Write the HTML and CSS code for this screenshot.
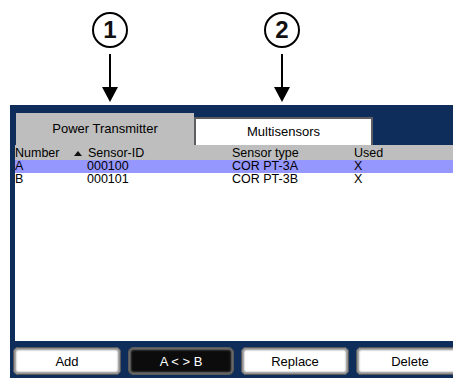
FILE: index.html
```html
<!DOCTYPE html>
<html lang="en">
<head>
    <meta charset="UTF-8">
    <meta name="viewport" content="width=device-width, initial-scale=1.0">
    <title>Sensor List</title>
    <link rel="stylesheet" href="styles.css">
</head>
<body>

    <div class="callouts">
        <div class="callout first">
            <div class="num">1</div>
            <div class="stem"></div>
            <div class="head"></div>
        </div>
        <div class="callout second">
            <div class="num">2</div>
            <div class="stem"></div>
            <div class="head"></div>
        </div>
    </div>

    <div class="screen">
        <div class="tabs">
            <div class="tab active">Power Transmitter</div>
            <div class="tab">Multisensors</div>
        </div>

        <div class="list">
            <div class="row header">
                <div>Number</div>
                <div class="sorted"><span class="arrow"></span>Sensor-ID</div>
                <div>Sensor type</div>
                <div>Used</div>
            </div>
            <div class="row selected">
                <div>A</div>
                <div class="id">000100</div>
                <div>COR PT-3A</div>
                <div>X</div>
            </div>
            <div class="row">
                <div>B</div>
                <div class="id">000101</div>
                <div>COR PT-3B</div>
                <div>X</div>
            </div>
        </div>

        <div class="buttons">
            <button>Add</button>
            <button class="dark">A &lt; &gt; B</button>
            <button>Replace</button>
            <button>Delete</button>
        </div>
    </div>

</body>
</html>
```

FILE: styles.css
```css
body {
    margin: 0;
    background: #ffffff;
    font-family: "Liberation Sans", Arial, sans-serif;
    overflow: hidden;
    width: 453px;
    height: 380px;
}

/* callout markers above the screen */
.callouts {
    display: flex;
    height: 105px;
}
.callout {
    width: 36px;
    display: flex;
    flex-direction: column;
    align-items: center;
    padding-top: 12px;
    box-sizing: border-box;
}
.callout.first {
    margin-left: 92px;
}
.callout.second {
    margin-left: 136px;
}
.num {
    width: 32px;
    height: 32px;
    border: 2px solid #000;
    border-radius: 50%;
    font-size: 24px;
    font-weight: bold;
    line-height: 32px;
    text-align: center;
    color: #111;
}
.stem {
    width: 2px;
    height: 33px;
    margin-top: 6px;
    background: #000;
}
.head {
    width: 0;
    height: 0;
    border-left: 8px solid transparent;
    border-right: 8px solid transparent;
    border-top: 15px solid #000;
}

/* device screen */
.screen {
    margin-left: 10px;
    width: 460px;
    height: 273px;
    background: #0f2d5b;
    padding-top: 8px;
    box-sizing: border-box;
    display: flex;
    flex-direction: column;
}
.tabs {
    display: flex;
    height: 32px;
    margin-left: 6px;
}
.tab {
    width: 179px;
    margin-top: 4px;
    background: #fff;
    border: 2px solid #5e5e62;
    border-bottom: none;
    box-sizing: border-box;
    font-size: 13px;
    text-align: center;
    padding-top: 5px;
    color: #000;
}
.tab.active {
    width: 178px;
    margin-top: 0;
    border: none;
    background: #bebebe;
    padding-top: 8px;
}

.list {
    margin-left: 5px;
    height: 196px;
    background: #fff;
    font-size: 12.5px;
    color: #000;
}
.row {
    display: grid;
    grid-template-columns: 59px 158px 122px 1fr;
    height: 13px;
    line-height: 13px;
    overflow: hidden;
}
.row.header {
    background: #bebebe;
    height: 15px;
    line-height: 15px;
    padding-top: 1px;
    box-sizing: border-box;
}
.row.selected {
    background: #9696ff;
}
.id {
    padding-left: 13px;
}
.sorted {
    display: flex;
    align-items: center;
}
.arrow {
    width: 0;
    height: 0;
    margin: 0 6px 0 0;
    border-left: 4px solid transparent;
    border-right: 4px solid transparent;
    border-bottom: 5px solid #111;
}

.buttons {
    display: flex;
    gap: 7px;
    padding: 6px 0 0 3px;
}
button {
    width: 108px;
    height: 28px;
    flex-shrink: 0;
    background: #fff;
    border: 1px solid #5a5a5a;
    border-radius: 5px;
    box-shadow: inset 0 0 2px 2px #8c8c8c;
    font-family: "Liberation Sans", Arial, sans-serif;
    font-size: 13px;
    color: #000;
    padding: 0;
}
button.dark {
    width: 106px;
    background: #0c0c0c;
    color: #fff;
    box-shadow: inset 0 0 2px 2px #6e6e6e;
}
```
